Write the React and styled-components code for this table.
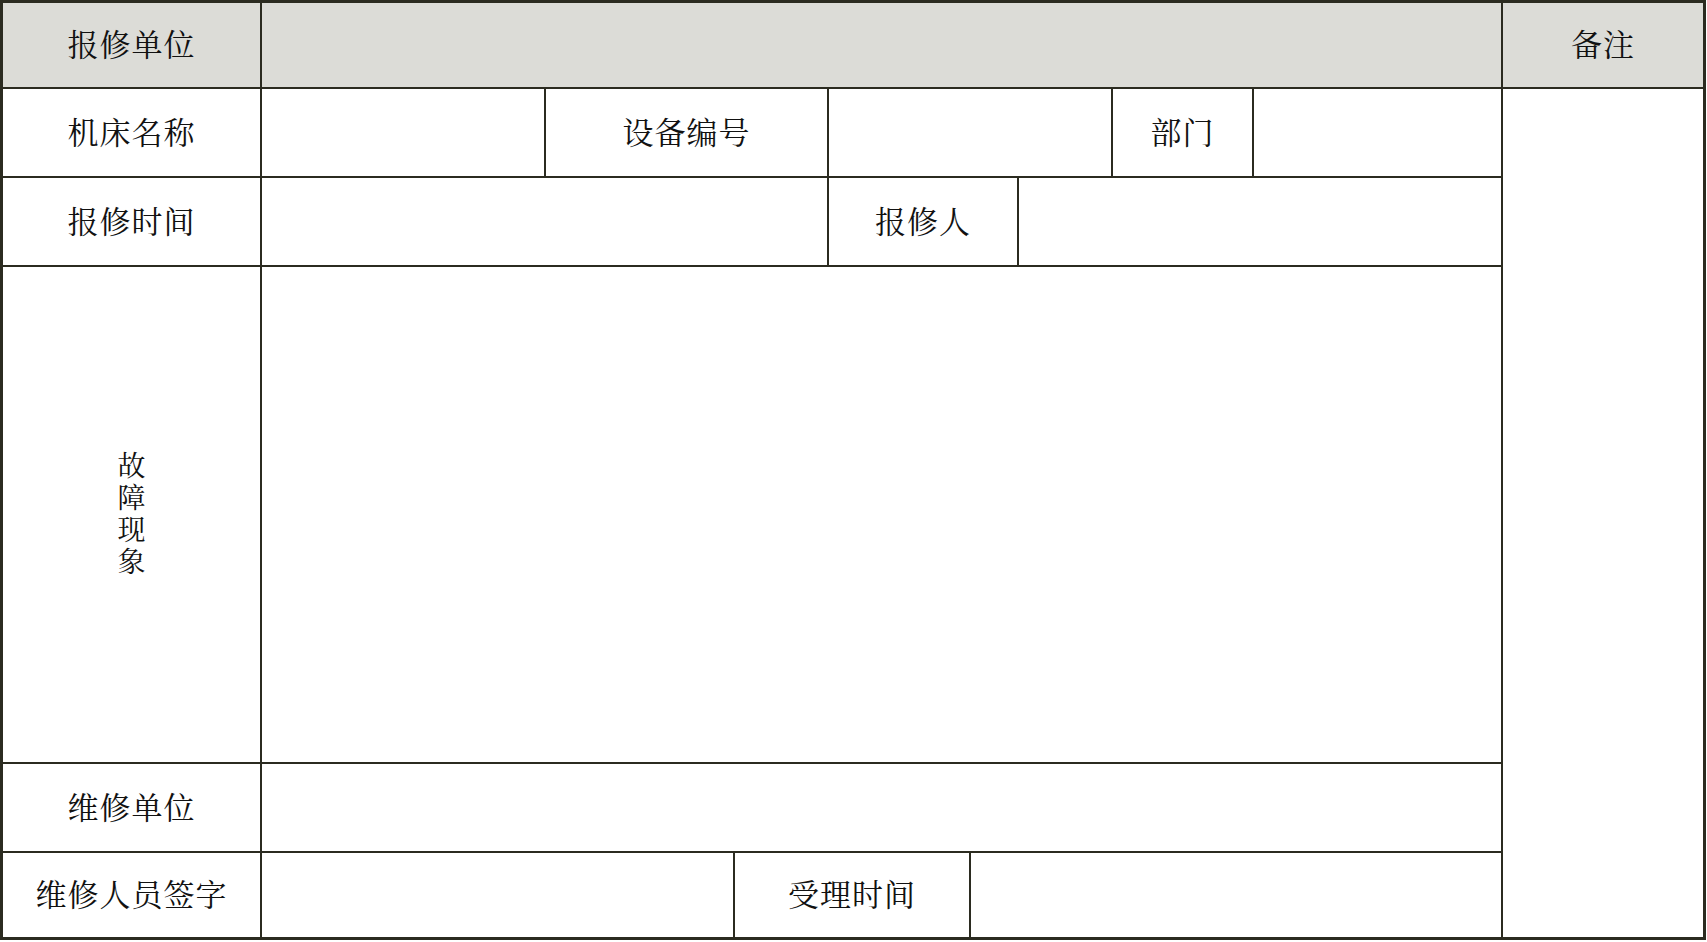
import React from "react";
import styled, { createGlobalStyle } from "styled-components";

const GlobalStyle = createGlobalStyle`
  html, body {
    margin: 0;
    padding: 0;
    background: #ffffff;
  }
  body {
    font-family: "Noto Serif CJK SC", "Noto Sans CJK SC", "Liberation Serif", serif;
  }
`;

// line colour shows through the gaps of the grid
const Sheet = styled.div`
  width: 1706px;
  height: 940px;
  box-sizing: border-box;
  padding: 3px;
  background: #2b2b20;
  display: grid;
  grid-template-columns: 257px 282px 187px 92px 140px 46px 92px 139px 247px 200px;
  grid-template-rows: 84px 87px 87px 495px 87px 84px;
  gap: 2px;
`;

const Cell = styled.div`
  grid-column: ${(p) => p.col || "auto"};
  grid-row: ${(p) => p.row || "auto"};
  background: ${(p) => (p.shaded ? "#dcdcd7" : "#ffffff")};
  display: flex;
  align-items: center;
  justify-content: center;
  box-sizing: border-box;
  padding-bottom: 4px;
  font-size: 31px;
  line-height: 36px;
  color: #111111;
  letter-spacing: 1px;
`;

// 故障现象 stacked upright, one character per line
const VerticalText = styled.div`
  writing-mode: vertical-rl;
  text-orientation: upright;
  font-size: 28px;
  line-height: 32px;
  letter-spacing: 4px;
  padding-top: 4px;
`;

const App = () => {
  return (
    <>
      <GlobalStyle />
      <Sheet>
        {/* row 1 */}
        <Cell shaded col="1" row="1">报修单位</Cell>
        <Cell shaded col="2 / 10" row="1" />
        <Cell shaded col="10" row="1">备注</Cell>

        {/* row 2 */}
        <Cell col="1" row="2">机床名称</Cell>
        <Cell col="2" row="2" />
        <Cell col="3 / 5" row="2">设备编号</Cell>
        <Cell col="5 / 8" row="2" />
        <Cell col="8" row="2">部门</Cell>
        <Cell col="9" row="2" />

        {/* remark column */}
        <Cell col="10" row="2 / 7" />

        {/* row 3 */}
        <Cell col="1" row="3">报修时间</Cell>
        <Cell col="2 / 5" row="3" />
        <Cell col="5 / 7" row="3">报修人</Cell>
        <Cell col="7 / 10" row="3" />

        {/* row 4 */}
        <Cell col="1" row="4">
          <VerticalText>故障现象</VerticalText>
        </Cell>
        <Cell col="2 / 10" row="4" />

        {/* row 5 */}
        <Cell col="1" row="5">维修单位</Cell>
        <Cell col="2 / 10" row="5" />

        {/* row 6 */}
        <Cell col="1" row="6">维修人员签字</Cell>
        <Cell col="2 / 4" row="6" />
        <Cell col="4 / 6" row="6">受理时间</Cell>
        <Cell col="6 / 10" row="6" />
      </Sheet>
    </>
  );
};

export default App;
